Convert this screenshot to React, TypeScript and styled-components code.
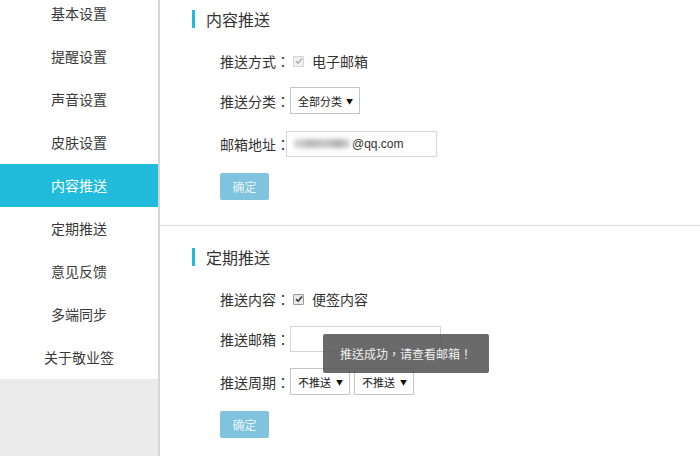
import React from "react";
import styled, { createGlobalStyle } from "styled-components";

const GlobalStyle = createGlobalStyle`
	html, body {
		margin: 0;
		padding: 0;
		background: #ffffff;
		overflow: hidden;
	}
	body {
		font-family: "Microsoft YaHei", "Noto Sans CJK SC", "Liberation Sans", sans-serif;
		color: #333333;
	}
`;

const Page = styled.div`
	width: 700px;
	height: 464px;
	margin-top: -8px;
	display: flex;
	position: relative;
`;

const Sidebar = styled.ul`
	width: 158px;
	margin: 0;
	padding: 0;
	list-style: none;
	background: #ebebeb;
	border-right: 2px solid #d6d6d6;
	flex-shrink: 0;
`;

const NavItem = styled.li<{ $active?: boolean }>`
	height: 43px;
	line-height: 43px;
	text-align: center;
	font-size: 14px;
	background: ${(p) => (p.$active ? "#21bcdc" : "#ffffff")};
	color: ${(p) => (p.$active ? "#ffffff" : "#3a3a3a")};
`;

const Main = styled.div`
	flex: 1;
	display: flex;
	flex-direction: column;
`;

const Section = styled.section<{ $divider?: boolean }>`
	padding: ${(p) => (p.$divider ? "18px" : "22px")} 0 0 32px;
	height: ${(p) => (p.$divider ? "234px" : "auto")};
	border-bottom: ${(p) => (p.$divider ? "1px solid #dcdcdc" : "none")};
	box-sizing: border-box;
`;

const Title = styled.h2`
	margin: 0 0 23px;
	height: 18px;
	display: flex;
	align-items: center;
	font-size: 16px;
	font-weight: normal;
	color: #333333;
	&::before {
		content: "";
		width: 3px;
		height: 18px;
		background: #21bcdc;
		margin-right: 11px;
	}
`;

const Form = styled.div`
	padding-left: 28px;
	display: flex;
	flex-direction: column;
	gap: 16px;
`;

const Row = styled.div<{ $short?: boolean }>`
	display: flex;
	align-items: center;
	height: ${(p) => (p.$short ? "20px" : "27px")};
	font-size: 14px;
`;

const Label = styled.span`
	width: 70px;
	flex-shrink: 0;
	white-space: nowrap;
	color: #333333;
`;

const Colon = styled.span`
	font-family: "Noto Sans CJK TC", sans-serif;
`;

const Check = styled.span<{ $disabled?: boolean }>`
	width: 9px;
	height: 9px;
	margin: 0 8px 0 3px;
	border: 1px solid ${(p) => (p.$disabled ? "#d4d4d4" : "#9a9a9a")};
	background: ${(p) => (p.$disabled ? "#f2f2f2" : "#e9e9e9")};
	border-radius: 1px;
	display: inline-flex;
	align-items: center;
	justify-content: center;
	svg {
		width: 8px;
		height: 8px;
	}
`;

const CheckText = styled.span`
	color: #333333;
`;

const Select = styled.div<{ $width: number }>`
	width: ${(p) => p.$width}px;
	height: 27px;
	box-sizing: border-box;
	border: 1px solid #c4c4c4;
	background: #ffffff;
	display: flex;
	align-items: center;
	justify-content: space-between;
	padding: 0 6px 0 7px;
	font-size: 11px;
	color: #222222;
	margin-right: 4px;
	&::after {
		content: "▼";
		font-size: 7px;
		color: #111111;
	}
`;

const Input = styled.div<{ $shift?: number }>`
	width: 151px;
	height: 26px;
	box-sizing: border-box;
	border: 1px solid #d6d6d6;
	margin-left: ${(p) => p.$shift || 0}px;
	display: flex;
	align-items: center;
	padding-left: 7px;
	font-size: 12px;
	font-family: "Liberation Sans", Arial, sans-serif;
	color: #333333;
`;

const Blur = styled.span`
	display: inline-block;
	width: 56px;
	height: 9px;
	margin-right: 2px;
	background: linear-gradient(90deg, #d8d8d8, #b8b8b8 30%, #c9c9c9 55%, #b0b0b0 80%, #d8d8d8);
	filter: blur(2px);
`;

const Button = styled.button`
	width: 49px;
	height: 27px;
	border: none;
	border-radius: 2px;
	background: #7fc3df;
	color: #e8f4fa;
	font-size: 12px;
	font-family: inherit;
	padding: 0;
`;

const Toast = styled.div`
	position: absolute;
	left: 323px;
	top: 342px;
	width: 166px;
	height: 39px;
	border-radius: 2px;
	background: rgba(80, 80, 80, 0.85);
	color: #eeeeee;
	font-size: 12px;
	font-family: "Noto Sans CJK TC", sans-serif;
	display: flex;
	align-items: center;
	justify-content: center;
`;

const CheckMark = ({ color }: { color: string }) => (
	<svg viewBox="0 0 8 8">
		<path d="M1 4.2 L3.1 6.2 L7 1.6" fill="none" stroke={color} strokeWidth="1.6" />
	</svg>
);

const FieldLabel = ({ text }: { text: string }) => (
	<Label>
		{text}
		<Colon>：</Colon>
	</Label>
);

const navItems = ["基本设置", "提醒设置", "声音设置", "皮肤设置", "内容推送", "定期推送", "意见反馈", "多端同步", "关于敬业签"];

const App = () => {
	return (
		<>
			<GlobalStyle />
			<Page>
				<Sidebar>
					{navItems.map((item) => (
						<NavItem key={item} $active={item === "内容推送"}>
							{item}
						</NavItem>
					))}
				</Sidebar>
				<Main>
					<Section $divider>
						<Title>内容推送</Title>
						<Form>
							<Row $short>
								<FieldLabel text="推送方式" />
								<Check $disabled>
									<CheckMark color="#b0b0b0" />
								</Check>
								<CheckText>电子邮箱</CheckText>
							</Row>
							<Row>
								<FieldLabel text="推送分类" />
								<Select $width={70}>全部分类</Select>
							</Row>
							<Row>
								<FieldLabel text="邮箱地址" />
								<Input $shift={-4}>
									<Blur />
									@qq.com
								</Input>
							</Row>
							<Row>
								<Button>确定</Button>
							</Row>
						</Form>
					</Section>
					<Section>
						<Title>定期推送</Title>
						<Form>
							<Row $short>
								<FieldLabel text="推送内容" />
								<Check>
									<CheckMark color="#333333" />
								</Check>
								<CheckText>便签内容</CheckText>
							</Row>
							<Row>
								<FieldLabel text="推送邮箱" />
								<Input />
							</Row>
							<Row>
								<FieldLabel text="推送周期" />
								<Select $width={60}>不推送</Select>
								<Select $width={60}>不推送</Select>
							</Row>
							<Row>
								<Button>确定</Button>
							</Row>
						</Form>
					</Section>
				</Main>
				<Toast>推送成功，请查看邮箱！</Toast>
			</Page>
		</>
	);
};

export default App;
